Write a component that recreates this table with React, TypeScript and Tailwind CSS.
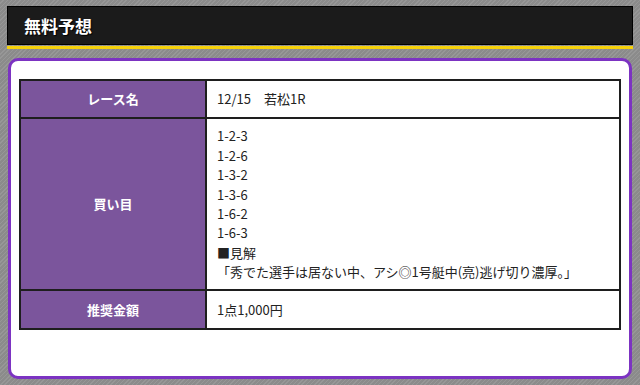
const PICKS = ['1-2-3', '1-2-6', '1-3-2', '1-3-6', '1-6-2', '1-6-3'];

const FONT = "font-['Hiragino_Kaku_Gothic_ProN','Noto_Sans_CJK_JP',sans-serif]";

export default function App() {
  return (
    <div
      className={`h-[385px] w-[640px] overflow-hidden bg-[repeating-linear-gradient(135deg,#8b8b8b_0px,#8b8b8b_2px,#979797_2px,#979797_3px)] px-[7px] pt-[6px] ${FONT}`}
    >
      <header className="flex h-[39px] items-center border border-black bg-[#1b1b1b] pl-[16px]">
        <h1 className="text-[17px] font-bold text-white [text-shadow:1px_1px_1px_#000]">無料予想</h1>
      </header>
      <div className="mt-px h-[3px] bg-[#f5d10a]" />

      <section className="mx-px mt-[9px] h-[321px] rounded-[10px] border-[3px] border-[#7c33c2] bg-white px-[8px] pt-[18px]">
        <table className="w-full border-collapse border-2 border-[#1e1e1e] text-[13px]">
          <tbody>
            <tr className="h-[38px]">
              <th className="w-[186px] border-2 border-[#1e1e1e] bg-[#7b559c] font-bold text-white">レース名</th>
              <td className="border-2 border-[#1e1e1e] pl-[10px] text-[#222]">12/15　若松1R</td>
            </tr>
            <tr className="h-[172px]">
              <th className="border-2 border-[#1e1e1e] bg-[#7b559c] font-bold text-white">買い目</th>
              <td className="border-2 border-[#1e1e1e] pl-[10px] leading-[19.4px] text-[#222]">
                {PICKS.map((p) => (
                  <div key={p}>{p}</div>
                ))}
                <div>■見解</div>
                <div>「秀でた選手は居ない中、アシ◎1号艇中(亮)逃げ切り濃厚。」</div>
              </td>
            </tr>
            <tr className="h-[39px]">
              <th className="border-2 border-[#1e1e1e] bg-[#7b559c] font-bold text-white">推奨金額</th>
              <td className="border-2 border-[#1e1e1e] pl-[10px] text-[#222]">1点1,000円</td>
            </tr>
          </tbody>
        </table>
      </section>
    </div>
  );
}
